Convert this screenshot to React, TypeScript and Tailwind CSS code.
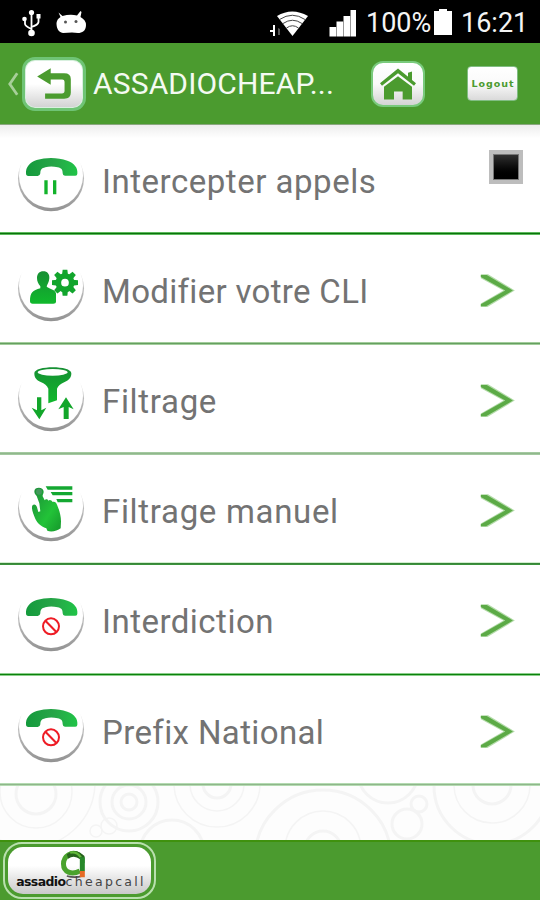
import { useState } from "react";
import type { ReactNode } from "react";

interface MenuItem {
  label: string;
  icon: ReactNode;
  height: string;
  text: string;
  line: string;
}

function Handset() {
  return (
    <path
      d="M78 130C77 112 88 98 110 90C140 81 174 82 202 92C224 100 234 114 232 131Q232 137 226 137H195Q188 137 188 130C188 118 184 114 173 112C160 109 147 109 136 112C125 115 121 119 121 130Q120 138 113 138H85Q78 138 78 130Z"
      fill="url(#phone)"
    />
  );
}

function Forbidden() {
  return (
    <g fill="none" stroke="#ee1c25" strokeWidth="6">
      <circle cx="153" cy="169" r="24" />
      <path d="M137 153L169 186" />
    </g>
  );
}

function PauseIcon() {
  return (
    <>
      <Handset />
      <path d="M133 151h10v42h-10zM159 151h10v42h-10z" fill="#12b32b" />
    </>
  );
}

function InterdictionIcon() {
  return (
    <>
      <Handset />
      <Forbidden />
    </>
  );
}

function UserGearIcon() {
  const teeth = [0, 45, 90, 135, 180, 225, 270, 315];
  return (
    <>
      <path
        d="M130 94C142 94 149 102 148 115C147 127 142 134 140 139C140 145 165 147 168 160V186Q168 191 160 191H98Q90 191 90 184C90 158 98 151 121 145V139C115 132 111 124 111 114C111 102 118 94 130 94Z"
        fill="url(#body)"
      />
      <g fill="#12a52d">
        {teeth.map((a) => (
          <path
            key={a}
            d="M186 106L188 89H202L204 106Z"
            transform={`rotate(${a} 195 128)`}
          />
        ))}
      </g>
      <circle cx="195" cy="128" r="20" fill="none" stroke="#12a52d" strokeWidth="17" />
    </>
  );
}

function FunnelIcon() {
  return (
    <>
      <path
        d="M103 70C103 46 214 46 214 70C214 84 207 90 194 96C181 102 174 108 171 116V151L145 160V116C141 106 134 101 122 96C109 90 103 84 103 70Z"
        fill="url(#body)"
      />
      <ellipse cx="158" cy="67" rx="45" ry="10" fill="#fff" />
      <path
        d="M111 142H124V181L139 173L118 208L95 173L111 181ZM198 142L221 178L206 171V207H191V171L175 178Z"
        fill="#12a62a"
      />
    </>
  );
}

function HandIcon() {
  return (
    <>
      <path
        d="M103 94C103 80 131 80 131 95C131 101 127 105 128 109L134 121C137 116 143 118 145 122C149 118 155 121 158 126C164 124 169 128 171 134C178 150 183 168 183 184L182 205C172 214 151 217 142 212L139 205C122 199 109 187 104 172C101 164 95 151 96 140C98 130 109 132 111 142L115 156L121 154L118 130L110 108C105 104 103 99 103 94Z"
        fill="url(#hand)"
      />
      <circle cx="117" cy="95" r="9" fill="#43985b" />
      <path d="M137 79H217V89H143ZM152 96H217V106H158ZM169 117H217V127H173Z" fill="#14a832" />
    </>
  );
}

const items: MenuItem[] = [
  { label: "Intercepter appels", icon: <PauseIcon />, height: "h-[110px]", text: "tracking-[0.52px]", line: "border-y-[#5cba5c] bg-[#0b720b]" },
  { label: "Modifier votre CLI", icon: <UserGearIcon />, height: "h-[110px]", text: "tracking-[0.32px]", line: "border-y-[#a2cd9b] bg-[#669f60]" },
  { label: "Filtrage", icon: <FunnelIcon />, height: "h-[110px]", text: "tracking-[0.68px]", line: "border-y-[#a3c9a0] bg-[#91b78c]" },
  { label: "Filtrage manuel", icon: <HandIcon />, height: "h-[110px]", text: "tracking-[0.68px]", line: "border-t-[#d1efce] border-b-[#3c943c] bg-[#388438]" },
  { label: "Interdiction", icon: <InterdictionIcon />, height: "h-[111px]", text: "tracking-[0.48px]", line: "border-y-[#8bcd8b] bg-[#0a820a]" },
  { label: "Prefix National", icon: <InterdictionIcon />, height: "h-[110px]", text: "tracking-[0.38px]", line: "border-y-[#b4dbb2] bg-[#8fb68a]" },
];

function Defs() {
  return (
    <svg className="absolute h-0 w-0" aria-hidden="true">
      <defs>
        <linearGradient id="phone">
          <stop offset="0" stopColor="#149a3c" />
          <stop offset="0.55" stopColor="#27a548" />
          <stop offset="1" stopColor="#1fc447" />
        </linearGradient>
        <linearGradient id="body" x1="0" y1="0" x2="0" y2="1">
          <stop offset="0" stopColor="#168f33" />
          <stop offset="1" stopColor="#10b92c" />
        </linearGradient>
        <linearGradient id="hand" x1="0" y1="0" x2="1" y2="1">
          <stop offset="0" stopColor="#1c8b38" />
          <stop offset="0.6" stopColor="#22c338" />
          <stop offset="1" stopColor="#15972b" />
        </linearGradient>
        <linearGradient id="ring" x1="0" y1="0" x2="0" y2="1">
          <stop offset="0.25" stopColor="#999" stopOpacity="0" />
          <stop offset="0.5" stopColor="#aaa" stopOpacity="0.8" />
          <stop offset="1" stopColor="#929292" />
        </linearGradient>
        <filter id="soft" x="-10%" y="-10%" width="120%" height="120%">
          <feGaussianBlur stdDeviation="2" />
        </filter>
      </defs>
    </svg>
  );
}

function RoundIcon({ children }: { children: ReactNode }) {
  return (
    <svg viewBox="45 30 210 225" className="mt-[15px] h-[75px] w-[70px] shrink-0">
      <circle cx="153" cy="145" r="99" fill="url(#ring)" filter="url(#soft)" />
      <circle cx="153" cy="138" r="96" fill="#fff" />
      {children}
    </svg>
  );
}

function StatusBar() {
  return (
    <div className="flex h-[43px] items-center bg-black text-[27px] leading-none text-[#f4f4f4]">
      <svg viewBox="0 0 90 40" className="h-10 w-[90px]" fill="#fff" stroke="#fff">
        <g fill="none" strokeWidth="1.8">
          <path d="M31.5 13V32M25 17V22Q25 24 31.5 27M38.5 16V20Q38 23 31.5 25" />
        </g>
        <g stroke="none">
          <circle cx="31.5" cy="10.5" r="2.6" />
          <circle cx="24.5" cy="17" r="2.3" />
          <rect x="36.5" y="12" width="4" height="4.5" />
          <circle cx="31.5" cy="31" r="3.3" />
          <path d="M58.5 10.500L62.5 14Q70 12 77 13.500L80.5 9L81.5 10L80.5 15Q86 18 86 23C86 29 82 31 78 31L72 30.5L63 31C58 30 56.5 26 56.5 21Q57 17 60.5 15Z" />
        </g>
        <g fill="#555" stroke="none">
          <circle cx="65.5" cy="20" r="1.5" />
          <circle cx="76" cy="19.5" r="1.5" />
        </g>
      </svg>
      <svg viewBox="270 0 90 40" className="ml-auto h-10 w-[90px]" fill="#fff">
        <path d="M273 23h2v11h-2v-4h-3v-2h3z" />
        <path d="M278 26l2 1v6h-2z" fill="#555" />
        <path d="M277 14Q292 5 308 14L292.5 34Z" />
        <g fill="none" stroke="#444" strokeWidth="1">
          <path d="M279.5 17.5Q292.5 9 305 17.5M283 21.5Q292.5 15 302 21.5M286.5 26Q292.5 21.5 298.5 26" />
        </g>
        <path d="M329.5 25h6.6v9.5h-6.600zM336.500 19.500h6.600v15h-6.600zM343.500 14h6.600v20.500h-6.600zM350.500 8h5.500v26.500h-5.500z" />
      </svg>
      <span className="ml-[6px] w-[68px] pt-[3px] whitespace-nowrap">100%</span>
      <svg viewBox="0 0 18 26" className="h-[26px] w-[18px]" fill="#fff">
        <path d="M5 0h8v2h5v24H0V2h5z" />
      </svg>
      <span className="mr-[11px] ml-[9px] w-[68px] pt-[3px] whitespace-nowrap">16:21</span>
    </div>
  );
}

function Header() {
  return (
    <header className="flex h-[82px] items-center border-b border-[#8aa67f] bg-[#4b9b2f]">
      <svg viewBox="0 0 14 24" className="ml-[7px] h-6 w-[13px]" fill="none" stroke="#a7cf99" strokeWidth="3">
        <path d="M11 0.5L3 12L11 23.5" />
      </svg>
      <button className="ml-[2px] flex h-[54px] w-[64px] items-center justify-center rounded-[13px] border-[3px] border-[#6fc475] bg-linear-to-b from-white via-white to-[#d1d1d1] shadow-[inset_0_0_0_1px_#d9f0df]">
        <svg viewBox="108 204 102 94" className="h-[31px] w-[34px]" fill="#4b9b2f">
          <path d="M108 230L149 205V220H190Q210 220 210 238V279Q210 297 190 297H132V281H183Q191 281 191 273V246Q191 239 184 239H149V255Z" />
        </svg>
      </button>
      <h1 className="ml-[7px] w-[278px] pt-px text-[30px] leading-none whitespace-nowrap text-[#f4faf2]">
        <span className="tracking-[0.15px]">ASSADIOCHEAP...</span>
      </h1>
      <button className="flex h-[46px] w-[54px] items-center justify-center rounded-[12px] border-2 border-[#79ca7c] bg-linear-to-b from-white via-[#fafafa] to-[#d4d4d4]">
        <svg viewBox="332 203 108 95" className="h-[32px] w-[36px]" fill="#4b9b2f">
          <path d="M332 248L386 204L440 248L434 256L386 218L338 256ZM416 217L428 213V239L416 229ZM344 259L386 227L428 259V297H400V273H374V297H344Z" />
        </svg>
      </button>
      <button className="ml-[42px] flex h-[35px] w-[51px] items-center justify-center rounded-[4px] border border-[#80bd82] bg-linear-to-b from-white via-[#fafafa] to-[#dadada] pt-px pl-px font-['DejaVu_Sans'] text-[9.5px] font-bold tracking-[1px] text-[#4b9b2f]">
        Logout
      </button>
    </header>
  );
}

function Chevron() {
  return (
    <svg viewBox="118 425 108 106" className="mt-[38px] mr-[24px] ml-auto h-[35px] w-[36px] shrink-0">
      <path d="M120 429H142L223 478L140 528H120V517L188 478L120 441Z" fill="#b5dcab" />
      <path d="M120 431H138L217 478L136 526H120V520L194 478L120 437Z" fill="#5caa46" />
    </svg>
  );
}

function Backdrop() {
  return (
    <svg viewBox="0 786 540 54" className="block h-[54px] w-full bg-[#fdfdfd]" fill="none" stroke="#f4f4f4">
      <g strokeWidth="3">
        <circle cx="36" cy="794" r="20" />
        <circle cx="129" cy="802" r="8" />
        <circle cx="129" cy="802" r="17" />
        <circle cx="129" cy="802" r="29" />
        <circle cx="217" cy="784" r="14" />
        <circle cx="172" cy="852" r="32" />
        <circle cx="323" cy="849" r="18" />
        <circle cx="323" cy="858" r="68" />
        <circle cx="388" cy="773" r="30" />
        <circle cx="407" cy="824" r="15" />
        <circle cx="419" cy="804" r="8" />
        <circle cx="492" cy="785" r="19" />
        <circle cx="492" cy="786" r="58" />
      </g>
      <g strokeWidth="1.5">
        <circle cx="36" cy="792" r="36" />
        <circle cx="30" cy="782" r="65" />
        <circle cx="217" cy="784" r="27" />
        <circle cx="217" cy="784" r="43" />
        <circle cx="96" cy="831" r="6" />
        <circle cx="109" cy="826" r="8" />
        <circle cx="323" cy="849" r="38" />
        <circle cx="492" cy="785" r="38" />
      </g>
    </svg>
  );
}

function Footer() {
  return (
    <footer className="flex h-[60px] items-start border-t-2 border-[#3f910e] bg-[#4b9b2f] pl-[3px]">
      <div className="h-[57px] w-[153px] rounded-[19px] border-2 border-[#b9e0ae] p-[3px]">
        <div className="flex h-full flex-col items-center overflow-hidden rounded-[15px] bg-linear-to-b from-white from-40% to-[#c9c9c9]">
          <svg viewBox="170 238 80 84" className="mt-[3px] ml-[-12px] h-[28px] w-[27px] shrink-0">
            <path d="M190 316Q215 323 236 316" stroke="#555" strokeWidth="5" fill="none" />
            <path d="M229 254C203 238 180 257 180 280C180 304 204 314 229 301" fill="none" stroke="#4aa32d" strokeWidth="15" />
            <path d="M190 251Q216 230 243 256V278L230 266Q212 252 194 264Z" fill="#27631c" />
            <path d="M200 246Q219 242 232 260" stroke="#62b83b" strokeWidth="7" fill="none" />
            <path d="M229 260H244V302H229Z" fill="#27882a" />
            <path d="M229 301H244V320H229Z" fill="#e66b25" />
          </svg>
          <div className="-mt-[4px] ml-[3px] font-['DejaVu_Sans'] text-[12.5px] leading-[15px] whitespace-nowrap text-[#444]">
            <span className="font-bold tracking-[-0.6px] text-[#111]">assadio</span>
            <span className="tracking-[2.3px]">cheapcall</span>
          </div>
        </div>
      </div>
    </footer>
  );
}

export default function App() {
  const [checked, setChecked] = useState(false);

  return (
    <div className="flex h-[900px] w-[540px] flex-col overflow-hidden bg-white font-[Roboto,sans-serif]">
      <Defs />
      <StatusBar />
      <Header />
      <main className="flex-1">
        {items.map((item, i) => (
          <div
            key={item.label}
            className={`flex flex-col ${item.height} ${i === 0 ? "bg-linear-to-b from-[#ededed] to-white to-12%" : "bg-white"}`}
          >
            <div className="flex flex-1 items-start pl-[15px]">
              <RoundIcon>{item.icon}</RoundIcon>
              <span className={`mt-[36px] ml-[17px] text-[33px] leading-[42px] whitespace-nowrap text-[#737373] ${item.text}`}>
                {item.label}
              </span>
              {i === 0 ? (
                <button
                  role="checkbox"
                  aria-checked={checked}
                  aria-label={item.label}
                  onClick={() => setChecked(!checked)}
                  className="mt-[25px] mr-[17px] ml-auto h-[34px] w-[34px] border-[5px] border-[#bdbdbd] bg-linear-to-b from-[#303030] to-black text-white outline-1 -outline-offset-5 outline-[#777]"
                >
                  {checked ? "✓" : ""}
                </button>
              ) : (
                <Chevron />
              )}
            </div>
            <div className={`h-[3px] border-y ${item.line}`} />
          </div>
        ))}
        <Backdrop />
      </main>
      <Footer />
    </div>
  );
}
